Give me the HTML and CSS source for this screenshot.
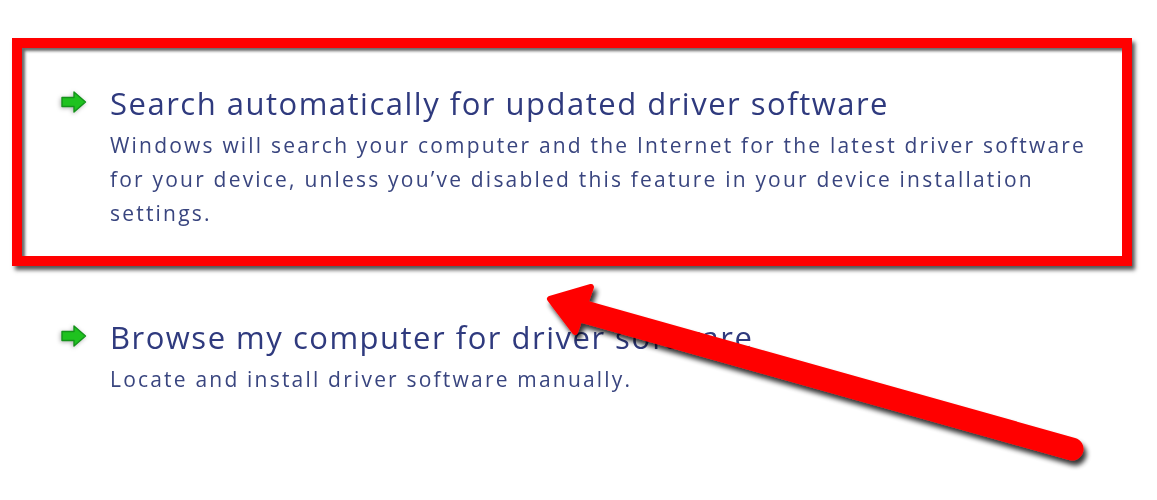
FILE: index.html
```html
<!DOCTYPE html>
<html lang="en">
<head>
    <meta charset="UTF-8">
    <meta name="viewport" content="width=device-width, initial-scale=1.0">
    <title>Update Driver Software</title>
    <link rel="stylesheet" href="styles.css">
</head>
<body>
    <div class="page">
        <div class="option highlighted">
            <svg class="go" viewBox="0 0 28 26" width="28" height="26">
                <path d="M2 8.5h12V3l11.5 10L14 23v-5.5H2z" fill="#1fc21f" stroke="#14931a" stroke-width="1.4" stroke-linejoin="round"/>
            </svg>
            <div class="option-text">
                <div class="title">Search automatically for updated driver software</div>
                <div class="desc">Windows will search your computer and the Internet for the latest driver software for your device, unless you&rsquo;ve disabled this feature in your device installation settings.</div>
            </div>
        </div>

        <div class="option">
            <svg class="go" viewBox="0 0 28 26" width="28" height="26">
                <path d="M2 8.5h12V3l11.5 10L14 23v-5.5H2z" fill="#1fc21f" stroke="#14931a" stroke-width="1.4" stroke-linejoin="round"/>
            </svg>
            <div class="option-text">
                <div class="title">Browse my computer for driver software</div>
                <div class="desc">Locate and install driver software manually.</div>
            </div>
        </div>

        <!-- big pointer drawn over the options -->
        <svg class="pointer" width="1157" height="500" viewBox="0 0 1157 500">
            <defs>
                <filter id="drop" x="-10%" y="-10%" width="120%" height="130%">
                    <feGaussianBlur in="SourceAlpha" stdDeviation="2.5"/>
                    <feOffset dx="3" dy="5"/>
                    <feComponentTransfer><feFuncA type="linear" slope="0.8"/></feComponentTransfer>
                    <feMerge><feMergeNode/><feMergeNode in="SourceGraphic"/></feMerge>
                </filter>
            </defs>
            <g filter="url(#drop)">
                <line x1="585" y1="312" x2="1072" y2="449" stroke="#ff0000" stroke-width="23" stroke-linecap="round"/>
                <path d="M550 299 L591 287 L575 332 Z" fill="#ff0000" stroke="#ff0000" stroke-width="6" stroke-linejoin="round"/>
            </g>
        </svg>
    </div>
</body>
</html>
```

FILE: styles.css
```css
body {
    margin: 0;
    background-color: #fff;
    font-family: 'Open Sans', 'Noto Sans', sans-serif;
}
.page {
    position: relative;
    width: 1157px;
    height: 500px;
    padding-top: 38px;
    box-sizing: border-box;
    filter: blur(0.6px);
}
.option {
    display: flex;
    align-items: flex-start;
    gap: 22px;
    margin-left: 12px;
    width: 1120px;
    box-sizing: border-box;
    padding: 52px 0 0 48px;
}
.option.highlighted {
    height: 228px;
    padding: 36px 0 0 38px;
    border: 10px solid #ff0000;
    box-shadow: inset 3px 3px 3px rgba(40,40,40,0.7), 3px 4px 4px rgba(30,30,30,0.75);
}
.go {
    flex-shrink: 0;
    margin-top: 5px;
    filter: drop-shadow(-1px 1px 2px rgba(0,0,0,0.3));
}
.option-text {
    flex: 1;
}
.title {
    font-size: 31px;
    line-height: 38px;
    letter-spacing: 1.5px;
    color: #2f3a7e;
}
.desc {
    margin-top: 6px;
    font-size: 21px;
    line-height: 34px;
    letter-spacing: 2.2px;
    color: #39457f;
    padding-right: 10px;
}
.pointer {
    position: absolute;
    top: 0;
    left: 0;
}
```
